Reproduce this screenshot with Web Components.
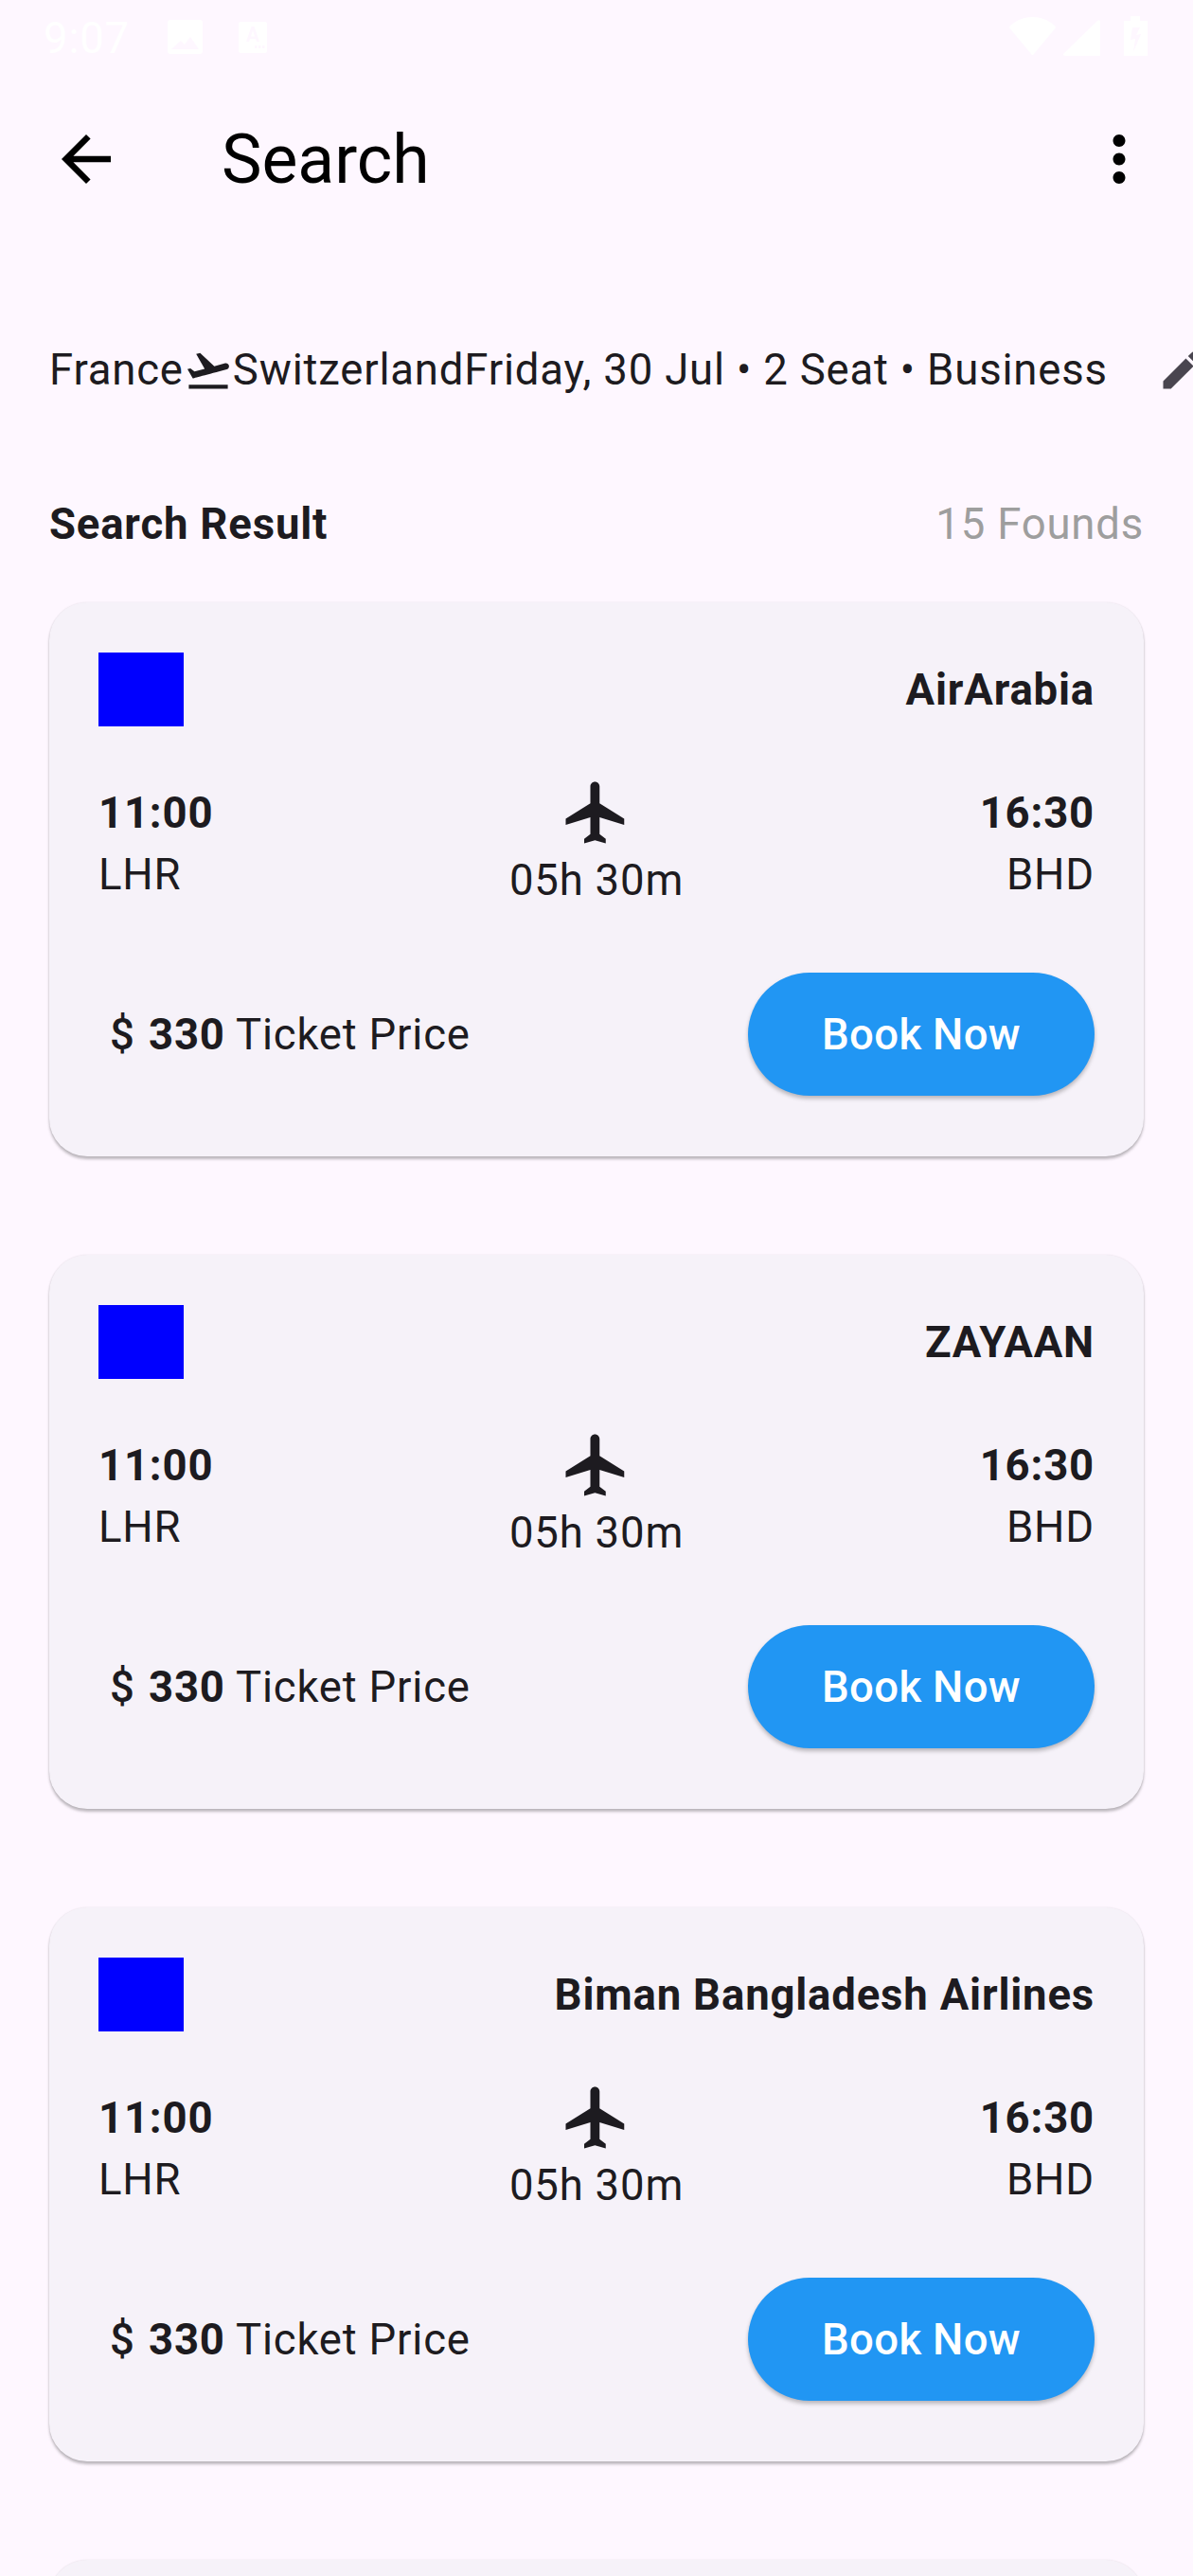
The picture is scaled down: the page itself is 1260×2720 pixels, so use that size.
<!doctype html>
<html>
<head>
<meta charset="utf-8">
<style>
  html, body { margin: 0; padding: 0; background: #fef7ff; }
  body { width: 1260px; height: 2720px; overflow: hidden; font-family: Roboto, "Liberation Sans", sans-serif; color: #1d1b20; letter-spacing: 0.8125px; }
</style>
</head>
<body>
<search-screen></search-screen>

<script>
const ICONS = {
  back: "M20 11H7.83l5.59-5.59L12 4l-8 8 8 8 1.41-1.41L7.83 13H20v-2z",
  more: "M12 8c1.1 0 2-.9 2-2s-.9-2-2-2-2 .9-2 2 .9 2 2 2zm0 2c-1.1 0-2 .9-2 2s.9 2 2 2 2-.9 2-2-.9-2-2-2zm0 6c-1.1 0-2 .9-2 2s.9 2 2 2 2-.9 2-2-.9-2-2-2z",
  takeoff: "M2.5 19h19v2h-19v-2zm19.57-9.36c-.21-.8-1.04-1.28-1.84-1.06L14.92 10l-6.9-6.43-1.93.51 4.14 7.17-4.97 1.33-1.97-1.54-1.45.39 2.59 4.49s7.12-1.9 16.57-4.43c.81-.23 1.28-1.05 1.07-1.85z",
  edit: "M3 17.25V21h3.75L17.81 9.94l-3.75-3.75L3 17.25zM20.71 7.04c.39-.39.39-1.02 0-1.41l-2.34-2.34c-.39-.39-1.02-.39-1.41 0l-1.83 1.83 3.75 3.75 1.83-1.83z",
  flight: "M21 16v-2l-8-5V3.5c0-.83-.67-1.5-1.5-1.5S10 2.67 10 3.5V9l-8 5v2l8-2.5V19l-2 1.5V22l3.5-1 3.5 1v-1.5L13 19v-5.5l8 2.5z"
};

class appIcon extends HTMLElement {
  connectedCallback() {
    const size = this.getAttribute("size") || 78;
    const shadowRoot = this.attachShadow({ mode: "open" });
    shadowRoot.innerHTML = `
      <style>
        :host { display: block; flex: none; width: ${size}px; height: ${size}px; }
        svg { display: block; width: 100%; height: 100%; fill: currentColor; }
      </style>
      <svg viewBox="0 0 24 24"><path d="${ICONS[this.getAttribute("name")]}"></path></svg>
    `;
  }
}
customElements.define("app-icon", appIcon);

class statusBar extends HTMLElement {
  constructor() {
    super();
    const shadowRoot = this.attachShadow({ mode: "open" });
    shadowRoot.innerHTML = `
      <style>
        :host { display: flex; height: 64px; box-sizing: border-box; padding: 0 48px 0 46px; color: #fff; align-items: flex-start; }
        .time { font-size: 45.5px; line-height: 54px; margin-top: 14px; width: 131px; }
        .right { margin-left: auto; display: flex; align-items: flex-start; }
        svg { display: block; fill: #fff; }
      </style>
      <span class="time">9:07</span>
      <svg width="37" height="36" viewBox="0 0 37 36" style="margin-top:21px"><path fill-rule="evenodd" d="M3 0h31a3 3 0 0 1 3 3v30a3 3 0 0 1-3 3H3a3 3 0 0 1-3-3V3a3 3 0 0 1 3-3zM4 31h29l-9-13-6 8-4-4z"/></svg>
      <svg width="30" height="33" viewBox="0 0 30 33" style="margin-top:23px;margin-left:38px"><path fill-rule="evenodd" d="M2 0h26a2 2 0 0 1 2 2v29a2 2 0 0 1-2 2H2a2 2 0 0 1-2-2V2a2 2 0 0 1 2-2zM8 21h3l1-3h6l1 3h3L16.500 5h-3zM13 15.500 15 9l2 6.500zM17 25v3h2.500v-3zM21 25v3h2.500v-3zM25 25v3h2.500v-3z"/></svg>
      <div class="right">
        <svg width="49" height="40" viewBox="0 0 49 40" style="margin-top:18px"><path d="M1 9C8 3 16 0 24.500 0S41 3 48 9c1 1 1 2 .5 3L26 39c-.8 1.300-2.200 1.300-3 0L.5 12C0 11 0 10 1 9z"/></svg>
        <svg width="39" height="38" viewBox="0 0 39 38" style="margin-top:21px;margin-left:8px"><path d="M36 1c1-1 3-1 3 1v36H2c-2 0-2.500-1.500-1.500-2.500z"/></svg>
        <svg width="25" height="42" viewBox="0 0 25 42" style="margin-top:17px;margin-left:25px"><path fill-rule="evenodd" d="M7 0h10v5h8v37H0V5h7zM9 12l-2 13 5-1-2 14 8-19-5 1 4-8z"/></svg>
      </div>
    `;
  }
}
customElements.define("status-bar", statusBar);

class appBar extends HTMLElement {
  constructor() {
    super();
    const shadowRoot = this.attachShadow({ mode: "open" });
    shadowRoot.innerHTML = `
      <style>
        :host { display: flex; align-items: center; height: 208px; color: #000; letter-spacing: 0; }
        .lead { width: 182px; flex: none; display: flex; justify-content: center; }
        h1 { margin: 0 0 0 52px; font-size: 71.5px; font-weight: 400; line-height: 91px; flex: 1; }
        app-icon[name="more"] { margin-right: 39px; }
      </style>
      <div class="lead"><app-icon name="back"></app-icon></div>
      <h1><slot></slot></h1>
      <app-icon name="more"></app-icon>
    `;
  }
}
customElements.define("app-bar", appBar);

class tripSummary extends HTMLElement {
  constructor() {
    super();
    const shadowRoot = this.attachShadow({ mode: "open" });
    shadowRoot.innerHTML = `
      <style>
        :host { display: flex; align-items: center; margin-top: 86px; padding-left: 52px; font-size: 45.5px; line-height: 65px; white-space: nowrap; }
        app-icon[name="edit"] { margin-left: 52px; color: #49454f; }
      </style>
      <span>France</span>
      <app-icon name="takeoff" size="52"></app-icon>
      <span>Switzerland</span>
      <span>Friday, 30 Jul • 2 Seat • Business</span>
      <app-icon name="edit" size="52"></app-icon>
    `;
  }
}
customElements.define("trip-summary", tripSummary);

class resultHeader extends HTMLElement {
  constructor() {
    super();
    const shadowRoot = this.attachShadow({ mode: "open" });
    shadowRoot.innerHTML = `
      <style>
        :host { display: flex; justify-content: space-between; margin-top: 98px; padding: 0 52px; font-size: 45.5px; line-height: 65px; }
        strong { font-weight: 700; }
        span { color: #9e9e9e; }
      </style>
      <strong>Search Result</strong>
      <span>15 Founds</span>
    `;
  }
}
customElements.define("result-header", resultHeader);

class flightCard extends HTMLElement {
  constructor() {
    super();
    const shadowRoot = this.attachShadow({ mode: "open" });
    shadowRoot.innerHTML = `
      <style>
        :host { display: block; box-sizing: border-box; min-height: 585px; padding: 53px 52px 64px; background: #f6f2f9; border-radius: 40px; font-size: 45.5px; line-height: 65px; box-shadow: 0 3px 3px rgba(0,0,0,.25), 0 0 2px rgba(0,0,0,.1); }
        :host([empty]) .body { display: none; }
        .top { display: flex; justify-content: space-between; align-items: center; height: 78px; }
        .logo { width: 90px; height: 78px; background: #0000ff; }
        strong { font-weight: 700; }
        .route { display: flex; justify-content: space-between; align-items: center; margin-top: 52px; }
        .end { display: flex; flex-direction: column; }
        .end.to { align-items: flex-end; }
        .mid { display: flex; flex-direction: column; align-items: center; }
        .foot { display: flex; justify-content: space-between; align-items: center; margin-top: 65px; }
        .price { display: flex; align-items: center; white-space: pre; }
        .dollar { box-sizing: border-box; width: 53px; padding-right: 3px; text-align: center; font-weight: 500; letter-spacing: 0; }
      </style>
      <div class="body">
        <div class="top">
          <div class="logo"></div>
          <strong><slot></slot></strong>
        </div>
        <div class="route">
          <div class="end"><strong>11:00</strong><span>LHR</span></div>
          <div class="mid"><app-icon name="flight"></app-icon><span>05h 30m</span></div>
          <div class="end to"><strong>16:30</strong><span>BHD</span></div>
        </div>
        <div class="foot">
          <div class="price"><span class="dollar">$</span><strong>330</strong><span> Ticket Price</span></div>
          <book-button>Book Now</book-button>
        </div>
      </div>
    `;
  }
}
customElements.define("flight-card", flightCard);

class bookButton extends HTMLElement {
  constructor() {
    super();
    const shadowRoot = this.attachShadow({ mode: "open" });
    shadowRoot.innerHTML = `
      <style>
        :host { display: flex; align-items: center; justify-content: center; width: 366px; height: 130px; border-radius: 65px; background: #2196f3; color: #fff; font-size: 45.5px; font-weight: 500; letter-spacing: 0.325px; box-shadow: 0 3px 4px rgba(0,0,0,.25); }
      </style>
      <slot></slot>
    `;
  }
}
customElements.define("book-button", bookButton);

class searchScreen extends HTMLElement {
  constructor() {
    super();
    const shadowRoot = this.attachShadow({ mode: "open" });
    shadowRoot.innerHTML = `
      <style>
        :host { display: block; width: 1260px; height: 2720px; overflow: hidden; }
        .list { display: flex; flex-direction: column; gap: 104px; margin-top: 50px; padding: 0 52px; }
      </style>
      <status-bar></status-bar>
      <app-bar>Search</app-bar>
      <trip-summary></trip-summary>
      <result-header></result-header>
      <div class="list">
        <flight-card>AirArabia</flight-card>
        <flight-card>ZAYAAN</flight-card>
        <flight-card>Biman Bangladesh Airlines</flight-card>
        <flight-card empty></flight-card>
      </div>
    `;
  }
}
customElements.define("search-screen", searchScreen);
</script>
</body>
</html>
